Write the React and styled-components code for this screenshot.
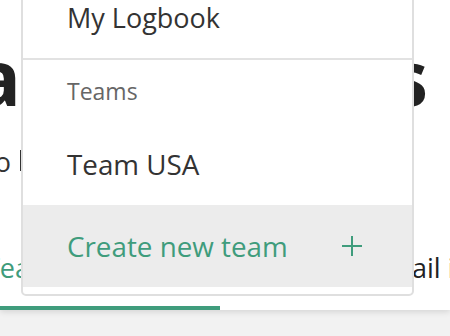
import React from 'react';
import styled, { createGlobalStyle } from 'styled-components';

const GlobalStyle = createGlobalStyle`
  html, body {
    margin: 0;
    padding: 0;
    background: #f2f2f2;
    font-family: "Open Sans", "Liberation Sans", sans-serif;
  }
  body {
    width: 450px;
    height: 336px;
    overflow: hidden;
  }
`;

const green = '#3f9c7c';

const Page = styled.div`
  position: relative;
  width: 450px;
  height: 336px;
  overflow: hidden;
`;

const Header = styled.header`
  background: #fff;
  box-shadow: 0 2px 6px rgba(0, 0, 0, 0.12);
  overflow: hidden;
`;

const Title = styled.h1`
  display: flex;
  justify-content: space-between;
  margin: 0;
  padding: 32px 22px 0 0;
  font-size: 77px;
  line-height: 90px;
  font-weight: 700;
  color: #222;
  white-space: nowrap;
`;

const Clip = styled.span`
  display: flex;
  justify-content: flex-end;
  width: ${({ $w }) => $w}px;
`;

const Sub = styled.div`
  display: flex;
  align-items: center;
  margin-top: 22px;
  font-size: 27px;
  line-height: 36px;
  color: #333;
  white-space: nowrap;
`;

const Caret = styled.span`
  width: 1px;
  height: 21px;
  margin: 0 0 3px 9px;
  background: #333;
`;

const Tabs = styled.nav`
  display: flex;
  margin-top: 70px;
  white-space: nowrap;
`;

const Tab = styled.div`
  width: ${({ $w }) => $w}px;
  padding: 0 0 20px ${({ $pad }) => $pad}px;
  box-sizing: border-box;
  font-size: 27px;
  line-height: 36px;
  color: ${({ $active }) => ($active ? green : '#222')};
  border-bottom: 4px solid ${({ $active }) => ($active ? green : 'transparent')};
  text-indent: ${({ $indent }) => $indent || 0}px;
`;

const Menu = styled.div`
  position: absolute;
  top: -24px;
  left: 21px;
  width: 393px;
  box-sizing: border-box;
  padding-bottom: 7px;
  background: #fff;
  border: 2px solid #dfdfdf;
  border-radius: 0 0 5px 5px;
`;

const Item = styled.div`
  display: flex;
  align-items: center;
  justify-content: space-between;
  padding: ${({ $first }) => ($first ? '22px' : '23px')} 49px
    ${({ $first }) => ($first ? '22px' : '23px')} 44px;
  font-size: ${({ $first }) => ($first ? '27px' : '27.8px')};
  line-height: 36px;
  color: ${({ $accent }) => ($accent ? green : '#333')};
  background: ${({ $hover }) => ($hover ? '#ececec' : 'transparent')};
  border-bottom: ${({ $divider }) => ($divider ? '2px solid #e2e2e2' : 'none')};
`;

const Section = styled.div`
  padding: 16px 44px 17px;
  font-size: 23px;
  line-height: 30px;
  color: #666;
`;

function PlusIcon() {
  return (
    <svg width="22" height="22" viewBox="0 0 22 22" fill="none">
      <path d="M11 1v20M1 11h20" stroke={green} strokeWidth="2" />
    </svg>
  );
}

export default function App() {
  return (
    <Page>
      <GlobalStyle />
      <Header>
        <Title>
          <Clip $w={21}>Data</Clip>
          <span>Teams</span>
        </Title>
        <Sub>
          <Clip $w={11}>Go to</Clip>
          <Caret />
        </Sub>
        <Tabs>
          <Tab $w={220} $pad={0} $indent={-15} $active>
            Team overview
          </Tab>
          <Tab $w={230} $pad={152}>
            Email invites
          </Tab>
        </Tabs>
      </Header>
      <Menu>
        <Item $first $divider>My Logbook</Item>
        <Section>Teams</Section>
        <Item>Team USA</Item>
        <Item $hover $accent>
          Create new team
          <PlusIcon />
        </Item>
      </Menu>
    </Page>
  );
}
